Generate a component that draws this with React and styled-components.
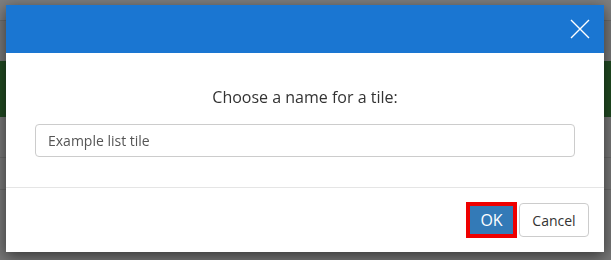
import React from "react";
import styled, { createGlobalStyle } from "styled-components";

const GlobalStyle = createGlobalStyle`
  html, body {
    margin: 0;
    padding: 0;
    background: #787878;
    font-family: "Open Sans", "Noto Sans", sans-serif;
  }
  * { box-sizing: border-box; }
`;

const Page = styled.div`
  width: 611px;
  height: 260px;
  overflow: hidden;
  background: #777777;
`;

const TopBar = styled.div`
  height: 21px;
  background: #7e7e7e;
  border-bottom: 1px solid #6b6b6b;
`;

const Banner = styled.div`
  margin-top: 40px;
  height: 56px;
  background: #214a22;
`;

const Row = styled.div`
  height: ${(p) => p.$h}px;
  border-bottom: 1px solid #6a6a6a;
`;

const Modal = styled.div`
  position: fixed;
  top: 5px;
  left: 6px;
  width: 598px;
  height: 247px;
  background: #fff;
  box-shadow: 0 4px 14px rgba(0, 0, 0, 0.55);
  display: flex;
  flex-direction: column;
`;

const Header = styled.div`
  height: 48px;
  background: #1a76d2;
  display: flex;
  align-items: center;
  justify-content: flex-end;
  padding-right: 14px;
`;

const CloseButton = styled.button`
  width: 20px;
  height: 20px;
  padding: 0;
  border: none;
  background: transparent;
  display: flex;
  cursor: pointer;
`;

const Body = styled.div`
  padding: 33px 29px 30px;
  border-bottom: 1px solid #e5e5e5;
  display: flex;
  flex-direction: column;
  align-items: center;
`;

const Label = styled.label`
  font-size: 16px;
  line-height: 22px;
  color: #333;
  margin-bottom: 16px;
`;

const Input = styled.input`
  width: 100%;
  height: 33px;
  border: 1px solid #ccc;
  border-radius: 4px;
  padding: 0 12px;
  font-family: inherit;
  font-size: 14px;
  color: #555;
  outline: none;
`;

const Footer = styled.div`
  flex: 1;
  display: flex;
  align-items: center;
  justify-content: flex-end;
  gap: 2px;
  padding-right: 15px;
`;

const Button = styled.button`
  font-family: inherit;
  cursor: pointer;
  border-radius: ${(p) => (p.$primary ? "0" : "4px")};
  font-size: ${(p) => (p.$primary ? "16px" : "14px")};
  width: ${(p) => (p.$primary ? "51px" : "70px")};
  height: ${(p) => (p.$primary ? "36px" : "34px")};
  padding: 0;
  background: ${(p) => (p.$primary ? "#337ab7" : "#fff")};
  color: ${(p) => (p.$primary ? "#fff" : "#333")};
  border: ${(p) => (p.$primary ? "4px solid #ee0000" : "1px solid #ccc")};
`;

export default function App() {
  return (
    <>
      <GlobalStyle />
      <Page>
        <TopBar />
        <Banner />
        <Row $h={41} />
        <Row $h={32} />
      </Page>
      <Modal>
        <Header>
          <CloseButton aria-label="Close">
            <svg width="20" height="20" viewBox="0 0 20 20">
              <path d="M1 1L19 19M19 1L1 19" stroke="#fff" strokeWidth="1.4" />
            </svg>
          </CloseButton>
        </Header>
        <Body>
          <Label>Choose a name for a tile:</Label>
          <Input defaultValue="Example list tile" />
        </Body>
        <Footer>
          <Button $primary>OK</Button>
          <Button>Cancel</Button>
        </Footer>
      </Modal>
    </>
  );
}
